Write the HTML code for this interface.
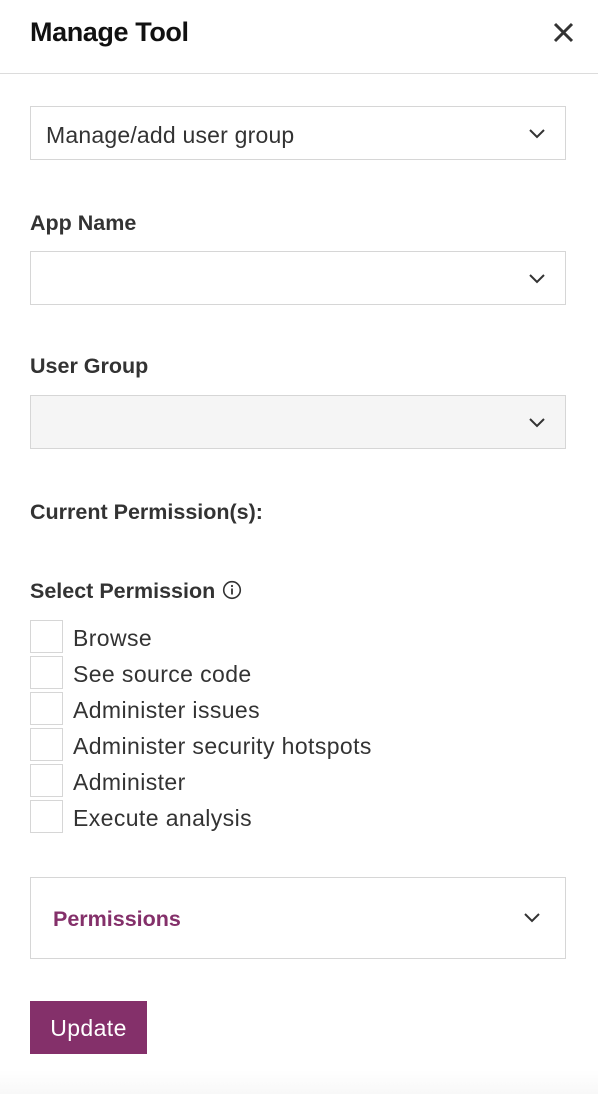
<!DOCTYPE html>
<html><head><meta charset="utf-8"><style>
*{margin:0;padding:0;box-sizing:border-box}
body{width:598px;height:1094px;background:#fff;position:relative;overflow:hidden;font-family:"Liberation Sans",sans-serif;color:#333}
.a{position:absolute;white-space:nowrap}
.sel{position:absolute;left:30px;width:536px;height:54px;border:1px solid #d6d6d6;background:#fff}
.chev{position:absolute;right:20px;top:20px}
.lbl{position:absolute;left:30px;font-size:21.5px;font-weight:bold;color:#333;letter-spacing:0}
.cb{position:absolute;left:30px;width:33px;height:33px;border:1px solid #d6d6d6}
.ct{position:absolute;left:73px;font-size:23px;letter-spacing:0.4px;color:#333;line-height:33px;top:2px}
</style></head><body>
<div class="a" style="left:30px;top:17px;font-size:27px;font-weight:bold;color:#111;letter-spacing:-0.4px">Manage Tool</div>
<svg class="a" style="left:553px;top:22px" width="21" height="21" viewBox="0 0 21 21"><path d="M2 2L19 19M19 2L2 19" stroke="#333" stroke-width="3"/></svg>
<div class="a" style="left:0;top:73px;width:598px;height:1px;background:#dcdcdc"></div>

<div class="sel" style="top:106px"><div class="a" style="left:15px;top:15px;font-size:23px;color:#333;letter-spacing:0.2px">Manage/add user group</div>
<svg class="chev" width="16" height="10" viewBox="0 0 16 10" style="top:22px"><path d="M1 1L8 8L15 1" fill="none" stroke="#333" stroke-width="2"/></svg></div>

<div class="lbl" style="top:211px">App Name</div>
<div class="sel" style="top:251px"><svg class="chev" width="16" height="10" viewBox="0 0 16 10" style="top:22px"><path d="M1 1L8 8L15 1" fill="none" stroke="#333" stroke-width="2"/></svg></div>

<div class="lbl" style="top:354px">User Group</div>
<div class="sel" style="top:395px;background:#f5f5f5"><svg class="chev" width="16" height="10" viewBox="0 0 16 10" style="top:22px"><path d="M1 1L8 8L15 1" fill="none" stroke="#333" stroke-width="2"/></svg></div>

<div class="lbl" style="top:500px">Current Permission(s):</div>
<div class="lbl" style="top:579px">Select Permission</div>
<svg class="a" style="left:222px;top:580px" width="20" height="20" viewBox="0 0 20 20"><circle cx="10" cy="10" r="8.3" fill="none" stroke="#333" stroke-width="1.6"/><rect x="9.1" y="8.5" width="1.8" height="6" fill="#333"/><circle cx="10" cy="6" r="1.1" fill="#333"/></svg>

<div class="cb" style="top:620px"></div><div class="ct" style="top:622px">Browse</div>
<div class="cb" style="top:656px"></div><div class="ct" style="top:658px">See source code</div>
<div class="cb" style="top:692px"></div><div class="ct" style="top:694px">Administer issues</div>
<div class="cb" style="top:728px"></div><div class="ct" style="top:730px">Administer security hotspots</div>
<div class="cb" style="top:764px"></div><div class="ct" style="top:766px">Administer</div>
<div class="cb" style="top:800px"></div><div class="ct" style="top:802px">Execute analysis</div>

<div class="sel" style="top:877px;height:82px"><div class="a" style="left:22px;top:29px;font-size:21.5px;font-weight:bold;color:#84306a">Permissions</div>
<svg class="chev" width="16" height="10" viewBox="0 0 16 10" style="top:35px;right:25px"><path d="M1 1L8 8L15 1" fill="none" stroke="#333" stroke-width="2"/></svg></div>

<div class="a" style="left:30px;top:1001px;width:117px;height:53px;background:#84306a;color:#fff;font-size:23px;letter-spacing:0.4px;text-align:center;line-height:55px">Update</div>
<div class="a" style="left:0;top:1070px;width:598px;height:24px;background:linear-gradient(#fff,#f8f8f8)"></div>
</body></html>
